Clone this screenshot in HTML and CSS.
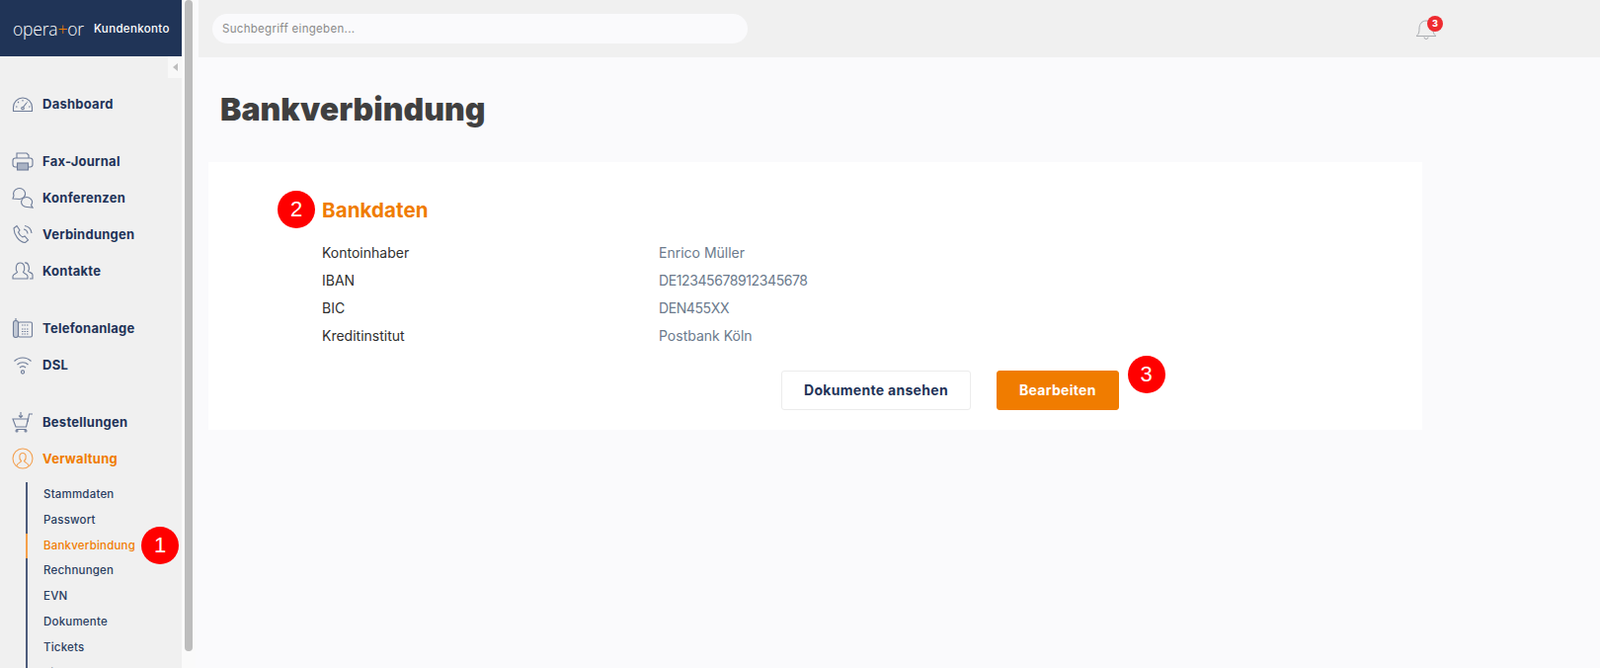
FILE: index.html
```html
<!DOCTYPE html>
<html lang="de">
<head>
    <meta charset="UTF-8">
    <meta name="viewport" content="width=device-width, initial-scale=1.0">
    <title>Bankverbindung - operator Kundenkonto</title>
    <link rel="stylesheet" href="styles.css">
</head>
<body>
    <div class="app">
        <aside class="sidebar">
            <div class="brand">
                <span class="logo">opera<span class="logo-plus">+</span>or</span>
                <span class="brand-label">Kundenkonto</span>
            </div>
            <div class="collapse-row"><span class="collapse"></span></div>
            <nav class="nav">
                <div class="nav-group">
                    <a class="nav-item">
                        <svg class="nav-icon" viewBox="0 0 22 22"><path d="M1.500 18.500v-4a9.500 9.500 0 0 1 19 0v4z"/><path d="M11 15l4-5M4 14h1.500M17 14h1.500M6 9l1 1M11 7v1.500M16 9l-.5.500"/><circle cx="11" cy="15.500" r="1.300"/></svg>
                        Dashboard
                    </a>
                </div>
                <div class="nav-group">
                    <a class="nav-item">
                        <svg class="nav-icon" viewBox="0 0 22 22"><path d="M5 8V3h10l2 2v3"/><rect x="1" y="8" width="20" height="9" rx="2.500"/><rect x="5.500" y="13" width="11" height="7" class="icon-fill"/></svg>
                        Fax-Journal
                    </a>
                    <a class="nav-item">
                        <svg class="nav-icon" viewBox="0 0 22 22"><path d="M8 12.500a6 5.500 0 1 0-6-3.500L1 12z"/><path d="M15.500 20.500a5.500 5 0 1 1 4-2l1.500 2.500z"/></svg>
                        Konferenzen
                    </a>
                    <a class="nav-item">
                        <svg class="nav-icon" viewBox="0 0 22 22"><path d="M2 5l3-2.500 3 4.500-1.500 2c1 2.500 2.500 4 4.500 5l2-1 3.500 4-3 2.500C7 19 2 11 2 5z"/><path d="M12 6a5 5 0 0 1 4 4.500M13 2.500a8.500 8.500 0 0 1 7 7.500"/></svg>
                        Verbindungen
                    </a>
                    <a class="nav-item">
                        <svg class="nav-icon" viewBox="0 0 22 22"><path d="M1 19v-2.500c0-2 3.500-2.500 4.500-4-2-2-2-9.500 3-9.500s5 7.500 3 9.500c1 1.500 4.500 2 4.500 4V19z"/><path d="M13 3c4-1 5.500 6 3.500 8.500 1 1.200 4.500 1.500 4.500 3.500V19h-3"/></svg>
                        Kontakte
                    </a>
                </div>
                <div class="nav-group">
                    <a class="nav-item">
                        <svg class="nav-icon" viewBox="0 0 22 22"><rect x="1.500" y="3.500" width="5" height="17" rx="2.500" class="icon-tint"/><path d="M4 3.500V1"/><rect x="6.500" y="5" width="14" height="15" rx="1.500"/><path d="M10 8h7M10 12h7M10 14.500h7M10 17h7" stroke-dasharray="1.500 1"/></svg>
                        Telefonanlage
                    </a>
                    <a class="nav-item">
                        <svg class="nav-icon" viewBox="0 0 22 22"><path d="M2.500 7.500a12 12 0 0 1 17 0M5.500 11a8 8 0 0 1 11 0M8 14a4.500 4.500 0 0 1 6 0"/><circle cx="11" cy="18.500" r="1.600"/></svg>
                        DSL
                    </a>
                </div>
                <div class="nav-group">
                    <a class="nav-item">
                        <svg class="nav-icon" viewBox="0 0 22 22"><path d="M1 8h15.500l-2 8H4z"/><path d="M16 11l1.500-8H21M4.500 18.500h10"/><path d="M9 1v5M7 4.500L9 6.500l2-2"/><circle cx="5" cy="20" r="1"/><circle cx="14" cy="20" r="1"/></svg>
                        Bestellungen
                    </a>
                    <a class="nav-item nav-item-active">
                        <svg class="nav-icon" viewBox="0 0 22 22"><circle cx="11" cy="11" r="10"/><path d="M5 18.500c0-3 4-3 4.500-5-2.500-2-2.500-8 1.500-8s4 6 1.500 8c.5 2 4.500 2 4.500 5"/></svg>
                        Verwaltung
                    </a>
                    <ul class="subnav">
                        <li>Stammdaten</li>
                        <li>Passwort</li>
                        <li class="subnav-active">Bankverbindung</li>
                        <li>Rechnungen</li>
                        <li>EVN</li>
                        <li>Dokumente</li>
                        <li>Tickets</li>
                        <li>Einstellungen</li>
                    </ul>
                </div>
            </nav>
            <span class="marker marker-one">1</span>
        </aside>
        <div class="scrollbar"><div class="scroll-thumb"></div></div>
        <div class="main">
            <header class="topbar">
                <input class="search" type="text" placeholder="Suchbegriff eingeben...">
                <div class="bell">
                    <svg viewBox="0 0 22 22" class="bell-icon"><path d="M1 18.500c2-1.500 3-3 3-7.500 0-5 3-8 7-8s7 3 7 8c0 4.500 1 6 3 7.500z"/><path d="M9 19.500a2 2 0 0 0 4 0"/></svg>
                    <span class="badge">3</span>
                </div>
            </header>
            <section class="content">
                <h1>Bankverbindung</h1>
                <div class="panel">
                    <h2>Bankdaten<span class="marker marker-two">2</span></h2>
                    <dl class="details">
                        <dt>Kontoinhaber</dt><dd>Enrico Müller</dd>
                        <dt>IBAN</dt><dd class="number">DE12345678912345678</dd>
                        <dt>BIC</dt><dd class="number">DEN455XX</dd>
                        <dt>Kreditinstitut</dt><dd>Postbank Köln</dd>
                    </dl>
                    <div class="actions">
                        <button class="button">Dokumente ansehen</button>
                        <button class="button button-primary">Bearbeiten<span class="marker marker-three">3</span></button>
                    </div>
                </div>
            </section>
        </div>
    </div>
</body>
</html>
```

FILE: styles.css
```css
html, body {
    margin: 0;
    height: 100%;
    overflow: hidden;
}
body {
    font-family: Inter, "Liberation Sans", sans-serif;
    background-color: #fafafc;
    color: #1f3358;
}
.app {
    display: flex;
    height: 676px;
}
.sidebar {
    position: relative;
    flex: 0 0 184px;
    background-color: #f0f0f0;
    overflow: hidden;
}
.brand {
    display: flex;
    align-items: center;
    height: 57px;
    padding-left: 13px;
    box-sizing: border-box;
    background-color: #203457;
    color: #fff;
}
.logo {
    font-family: "Open Sans", sans-serif;
    font-size: 17.500px;
    font-weight: 300;
    letter-spacing: -.2px;
    width: 82px;
}
.logo-plus {
    color: #f07c00;
}
.brand-label {
    font-size: 11.500px;
    font-weight: 500;
    letter-spacing: .35px;
}
.collapse-row {
    display: flex;
    justify-content: flex-end;
    height: 22px;
}
.collapse {
    display: flex;
    align-items: center;
    justify-content: center;
    width: 14px;
    background-color: #f8f8f8;
}
.collapse::before {
    content: "";
    border: 4px solid transparent;
    border-left-width: 0;
    border-right: 5px solid #bdbdbd;
}
.nav {
    padding-top: 7px;
}
.nav-group {
    margin-bottom: 21px;
}
.nav-item {
    display: flex;
    align-items: center;
    gap: 9px;
    height: 37px;
    padding-left: 12px;
    font-size: 13px;
    font-weight: 700;
    letter-spacing: .25px;
}
.nav-icon {
    width: 22px;
    height: 22px;
    fill: none;
    stroke: #6f7d99;
    stroke-width: 1.100;
}
.icon-fill {
    fill: #aab3c4;
}
.icon-tint {
    fill: #c3cad6;
}
.nav-item-active {
    color: #f07c00;
}
.nav-item-active .nav-icon {
    stroke: #f3a050;
}
.subnav {
    list-style: none;
    margin: 6px 0 0 26px;
    padding: 0;
    border-left: 2px solid #4d5c7c;
}
.subnav li {
    height: 25.800px;
    line-height: 25.800px;
    padding-left: 16px;
    margin-left: -2px;
    border-left: 2px solid transparent;
    font-size: 11.500px;
    font-weight: 500;
    letter-spacing: .2px;
    color: #2a3d60;
}
.subnav .subnav-active {
    color: #f07c00;
    border-left-color: #f5a04a;
}
.marker {
    position: absolute;
    width: 38px;
    height: 38px;
    border-radius: 50%;
    background-color: #ff0000;
    color: #fff;
    font-family: "Liberation Sans", sans-serif;
    font-size: 22px;
    font-weight: 400;
    letter-spacing: 0;
    line-height: 38px;
    text-align: center;
}
.marker-one {
    left: 143px;
    top: 533px;
}
.marker-two {
    left: -45px;
    top: -7.500px;
}
.marker-three {
    left: 100%;
    top: -16px;
    margin-left: 10px;
}
.scrollbar {
    flex: 0 0 14px;
    background-color: #fafafa;
}
.scroll-thumb {
    width: 8px;
    height: 659px;
    margin-left: 3px;
    border-radius: 4px;
    background-color: #bdbdbd;
}
.main {
    flex: 1;
    min-width: 0;
}
.topbar {
    display: flex;
    align-items: center;
    height: 58px;
    margin-left: 3px;
    padding-left: 14px;
    background-color: #f0f0f0;
}
.search {
    width: 542px;
    height: 30px;
    padding: 0 10px;
    box-sizing: border-box;
    border: none;
    border-radius: 15px;
    background-color: #fafafc;
    font-family: inherit;
    font-size: 11.500px;
    letter-spacing: .3px;
}
.search::placeholder {
    color: #8a8a8a;
}
.bell {
    position: relative;
    margin-left: 676px;
    width: 22px;
    height: 22px;
}
.bell-icon {
    width: 22px;
    height: 22px;
    fill: none;
    stroke: #a9acb0;
    stroke-width: 1;
}
.badge {
    position: absolute;
    left: 12px;
    top: -2px;
    width: 16px;
    height: 16px;
    border-radius: 50%;
    background-color: #ee2b30;
    color: #fff;
    font-size: 9px;
    font-weight: 800;
    line-height: 16px;
    text-align: center;
}
.content {
    padding: 0 0 0 13px;
    width: 1229px;
}
h1 {
    margin: 0;
    padding: 35px 0 0 12px;
    height: 71px;
    font-size: 32px;
    font-weight: 900;
    line-height: 36px;
    color: #404040;
}
.panel {
    height: 271px;
    padding: 36.500px 0 0 115px;
    box-sizing: border-box;
    background-color: #fff;
}
h2 {
    position: relative;
    margin: 0 0 17.500px;
    height: 24px;
    font-size: 20.500px;
    font-weight: 700;
    line-height: 24px;
    letter-spacing: .1px;
    color: #f07c00;
}
.details {
    display: grid;
    grid-template-columns: 341px 1fr;
    grid-auto-rows: 28px;
    margin: 0;
    font-size: 14px;
    line-height: 28px;
}
.details dt {
    color: #2f2f2f;
}
.details dd {
    margin: 0;
    color: #6b7a8c;
}
.details .number {
    letter-spacing: -.4px;
}
.actions {
    display: flex;
    gap: 26px;
    margin: 20.500px 0 0 465px;
}
.button {
    position: relative;
    height: 40px;
    padding: 0 22px;
    border: 1px solid #ececec;
    border-radius: 3px;
    background-color: #fff;
    color: #1f3358;
    font-family: inherit;
    font-size: 14px;
    font-weight: 700;
    letter-spacing: .3px;
}
.button-primary {
    border-color: #f07c00;
    background-color: #f07c00;
    color: #fff;
}
```
